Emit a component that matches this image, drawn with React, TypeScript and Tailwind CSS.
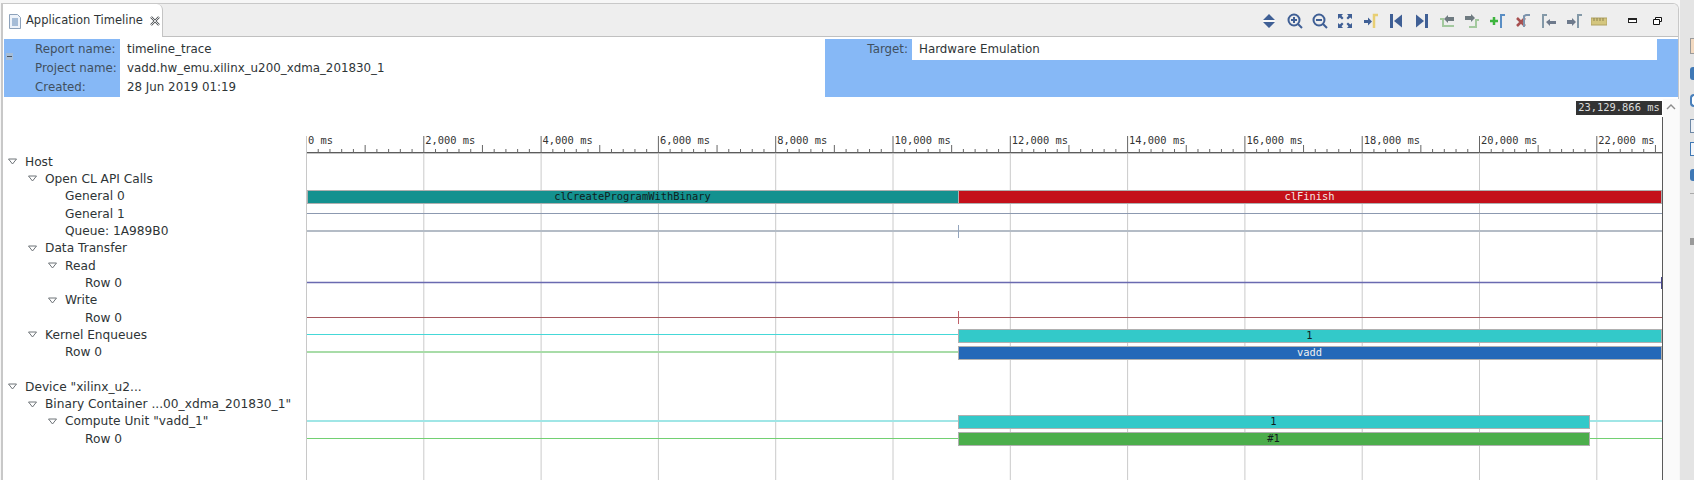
const BLUE = "#3f5f95";

const X0 = 306;
const X_END = 1662;
const PX_PER_MS = 117.3 / 2000;
const xAt = (ms: number) => X0 + ms * PX_PER_MS;

const majors = Array.from({ length: 12 }, (_, i) => i * 2000);
const treeRows: { label: string; depth: number; open?: boolean }[] = [
  { label: "Host", depth: 0, open: true },
  { label: "Open CL API Calls", depth: 1, open: true },
  { label: "General 0", depth: 2 },
  { label: "General 1", depth: 2 },
  { label: "Queue: 1A989B0", depth: 2 },
  { label: "Data Transfer", depth: 1, open: true },
  { label: "Read", depth: 2, open: true },
  { label: "Row 0", depth: 3 },
  { label: "Write", depth: 2, open: true },
  { label: "Row 0", depth: 3 },
  { label: "Kernel Enqueues", depth: 1, open: true },
  { label: "Row 0", depth: 2 },
  { label: "", depth: 0 },
  { label: 'Device "xilinx_u2...', depth: 0, open: true },
  { label: 'Binary Container ...00_xdma_201830_1"', depth: 1, open: true },
  { label: 'Compute Unit "vadd_1"', depth: 2, open: true },
  { label: "Row 0", depth: 3 },
];

const lines = [
  { y: 213.5, x1: X0, x2: X_END, color: "#8c99b0", w: 1 },
  { y: 231, x1: X0, x2: X_END, color: "#b4bcc6", w: 2 },
  { y: 282.5, x1: X0, x2: X_END, color: "#6a6ab0", w: 1.5 },
  { y: 317.5, x1: X0, x2: X_END, color: "#a5575d", w: 1 },
  { y: 334.5, x1: X0, x2: 958, color: "#45d8d8", w: 1 },
  { y: 352, x1: X0, x2: 958, color: "#a8dca8", w: 2 },
  { y: 421, x1: X0, x2: X_END, color: "#a0e6e6", w: 2 },
  { y: 438.5, x1: X0, x2: X_END, color: "#72d072", w: 1 },
];

const bars = [
  { x: 307, w: 651, y: 190, fill: "#14918f", label: "clCreateProgramWithBinary", text: "#102020" },
  { x: 958, w: 703, y: 190, fill: "#c4101a", label: "clFinish", text: "#f4e4e4" },
  { x: 958, w: 703, y: 329, fill: "#33c9c9", label: "1", text: "#102020" },
  { x: 958, w: 703, y: 346, fill: "#2468b8", label: "vadd", text: "#f0f0f0" },
  { x: 958, w: 631, y: 415, fill: "#33c9c9", label: "1", text: "#102020" },
  { x: 958, w: 631, y: 432, fill: "#4cae4c", label: "#1", text: "#102020" },
];

const TimelineChart = () => (
  <svg width={1680} height={380} viewBox="0 100 1680 380" className="absolute left-0 top-[100px]">
    {majors.map((ms) => (
      <line key={ms} x1={xAt(ms) + 0.5} x2={xAt(ms) + 0.5} y1={153} y2={480} stroke="#cacaca" />
    ))}
    <line x1={X0} x2={X_END} y1={152.5} y2={152.5} stroke="#5c5c5c" />
    <line x1={X0} x2={X_END} y1={153.5} y2={153.5} stroke="#c4c4c4" />
    {majors.map((ms) => (
      <g key={ms}>
        <line x1={xAt(ms) + 0.5} x2={xAt(ms) + 0.5} y1={136} y2={153} stroke="#666" />
        {Array.from({ length: 10 }, (_, i) => i).map(
          (i) =>
            i > 0 &&
            xAt(ms + i * 200) < X_END && (
              <line
                key={i}
                x1={xAt(ms + i * 200) + 0.5}
                x2={xAt(ms + i * 200) + 0.5}
                y1={i === 5 ? 145 : 149}
                y2={153}
                stroke="#666"
              />
            ),
        )}
        <text x={xAt(ms) + 2} y={144} className="font-['DejaVu_Sans_Mono',monospace] text-[10.4px]" fill="#333">
          {ms.toLocaleString("en-US")} ms
        </text>
      </g>
    ))}
    {lines.map((l, i) => (
      <line key={i} x1={l.x1} x2={l.x2} y1={l.y} y2={l.y} stroke={l.color} strokeWidth={l.w} />
    ))}
    <line x1={958.5} x2={958.5} y1={225} y2={238} stroke="#93a4bc" />
    <line x1={958.5} x2={958.5} y1={311} y2={324} stroke="#c06068" />
    <rect x={1661} y={277} width={2} height={12} fill="#46468a" />
    {bars.map((b) => (
      <g key={b.fill + b.y + b.x}>
        <rect x={b.x + 0.5} y={b.y + 0.5} width={b.w} height={13} fill={b.fill} stroke="#b0b0b0" />
        <text
          x={b.x + b.w / 2}
          y={b.y + 9.5}
          textAnchor="middle"
          className="font-['DejaVu_Sans_Mono',monospace] text-[10.4px]"
          fill={b.text}
        >
          {b.label}
        </text>
      </g>
    ))}
    <line x1={X0 + 0.5} x2={X0 + 0.5} y1={136} y2={480} stroke="#c8c8c8" />
    <line x1={X_END + 0.5} x2={X_END + 0.5} y1={117} y2={480} stroke="#5a5a5a" />
  </svg>
);

const Twisty = () => (
  <svg width={9} height={7} viewBox="0 0 9 7" className="-ml-[2px] shrink-0">
    <path d="M.5 1h8L4.5 6z" fill="#fff" stroke="#6e7478" strokeWidth={1} />
  </svg>
);

const TreeRow = ({ label, depth, open }: { label: string; depth: number; open?: boolean }) => (
  <div className="flex h-[17.33px] items-center whitespace-nowrap leading-none">
    <div className={depth === 0 ? "w-[10px]" : depth === 1 ? "w-[30px]" : depth === 2 ? "w-[50px]" : "w-[70px]"} />
    <div className="flex w-[15px] shrink-0 items-center">{open && <Twisty />}</div>
    <span>{label}</span>
  </div>
);

const icons = [
  <g key="updown" fill={BLUE}>
    <path d="M8 1l6 6H2zM8 15l6-6H2z" />
    <rect x={2} y={7.4} width={12} height={1.2} fill="#fff" />
  </g>,
  <g key="zoomin" fill="none" stroke={BLUE} strokeWidth={2}>
    <circle cx={7} cy={7} r={5.5} />
    <path d="M11 11l4 4M4 7h6M7 4v6" />
  </g>,
  <g key="zoomout" fill="none" stroke={BLUE} strokeWidth={2}>
    <circle cx={7} cy={7} r={5.5} />
    <path d="M11 11l4 4M4 7h6" />
  </g>,
  <g key="fit" fill={BLUE}>
    <path d="M1 1h5L4.5 2.8 6.5 5 5 6.5 2.8 4.5 1 6zM15 1h-5l1.5 1.8L9.5 5 11 6.5l2.2-2L15 6zM1 15h5l-1.5-1.8 2-2.2L5 9.5l-2.2 2L1 10zM15 15h-5l1.5-1.8-2-2.2L11 9.5l2.2 2L15 10z" />
  </g>,
  <g key="add-yellow">
    <path d="M1 7h4V4.5L9 8.5l-4 4V10H1z" fill={BLUE} />
    <path d="M11 15V2h4" fill="none" stroke="#e8cf74" strokeWidth={2.5} />
  </g>,
  <g key="first" fill={BLUE}>
    <rect x={2} y={1} width={3} height={14} />
    <path d="M14 1.5v13L6 8z" />
  </g>,
  <g key="last" fill={BLUE}>
    <rect x={11} y={1} width={3} height={14} />
    <path d="M2 1.5v13L10 8z" />
  </g>,
  <g key="green-left">
    <path d="M1 6h3v7h11" fill="none" stroke="#a3c99e" strokeWidth={2} />
    <path d="M5 6l4-4v2h6v4H9v2z" fill="#6e7a80" />
  </g>,
  <g key="green-right">
    <path d="M15 7h-3v7H5" fill="none" stroke="#a3c99e" strokeWidth={2} />
    <path d="M1 3h6V1l4 4-4 4V7H1z" fill="#6e7a80" />
  </g>,
  <g key="add-blue">
    <path d="M0 8h8M4 4v8" stroke="#3cb43c" strokeWidth={2.5} />
    <path d="M11 15V2h4" fill="none" stroke="#5a8ec4" strokeWidth={2} />
  </g>,
  <g key="remove">
    <path d="M2 5l8 8M10 5l-8 8" stroke="#a85050" strokeWidth={2.5} />
    <path d="M9 14V3l2-1h4" fill="none" stroke="#7d94ad" strokeWidth={2} />
  </g>,
  <g key="prev-marker">
    <path d="M2 15V2h4" fill="none" stroke="#8499a8" strokeWidth={2} />
    <path d="M5 9l4-3v2h6v3H9v2z" fill="#6e7a8c" />
  </g>,
  <g key="next-marker">
    <path d="M1 7h5V5l4 4-4 4v-2H1z" fill="#6e7a8c" />
    <path d="M12 15V2h4" fill="none" stroke="#8499a8" strokeWidth={2} />
  </g>,
  <g key="ruler">
    <rect x={0} y={5} width={16} height={7} fill="#d4c67e" stroke="#b0a262" />
    <path d="M3 5v3M6 5v3M9 5v3M12 5v3" stroke="#8d8250" strokeWidth={1} />
  </g>,
];

const Toolbar = () => (
  <div className="ml-auto flex items-center pt-px">
    {icons.map((icon, i) => (
      <div key={i} className="flex w-[25.4px] justify-center">
        <svg width={16} height={16} viewBox="0 0 16 16">
          {icon}
        </svg>
      </div>
    ))}
    <div className="ml-[8px] flex w-[25px] justify-center">
      <div className="h-[5px] w-[9px] border border-t-2 border-[#222] bg-white" />
    </div>
    <div className="flex w-[25px] justify-center">
      <svg width={9} height={8} viewBox="0 0 9 8">
        <path d="M2.5 2.5V.5h6v4H6.5" fill="#fff" stroke="#111" />
        <path d="M.5 2.5h6v5h-6z" fill="#fff" stroke="#111" />
      </svg>
    </div>
    <div className="w-[8px]" />
  </div>
);

const Tab = () => (
  <div className="flex h-[33px] w-[160px] shrink-0 items-center rounded-tr-[6px] border-r border-[#c4c4c4] bg-white pl-[6px] pt-px">
    <svg width={12} height={15} viewBox="0 0 12 15">
      <path d="M.5.5h8l3 3v11H.5z" fill="#eef3fa" stroke="#8da2bb" />
      <path d="M3 5h6M3 7h6M3 9h6M3 11h6" stroke="#5f86b4" />
    </svg>
    <span className="ml-[5px] whitespace-nowrap text-[11.5px] text-[#2e3436]">Application Timeline</span>
    <svg width={10} height={10} viewBox="0 0 10 10" className="ml-[7px]">
      <path d="M1 1l8 8M9 1L1 9" stroke="#55595c" strokeWidth={2.4} />
      <path d="M1 1l8 8M9 1L1 9" stroke="#fff" strokeWidth={0.8} />
    </svg>
  </div>
);

const InfoRow = ({ label, value }: { label: string; value: string }) => (
  <div className="flex h-[19px] items-center whitespace-nowrap">
    <span className="w-[123px] shrink-0 pl-[31px] text-[#41505f]">{label}</span>
    <span className="text-[#2e3436]">{value}</span>
  </div>
);

const ReportHeader = () => (
  <div className="flex h-[60px] pl-px pt-[2px] text-[11.85px]">
    <div className="relative w-[450px] shrink-0">
      <div className="absolute left-0 top-0 h-[58px] w-[116px] bg-[#86b8f6]" />
      <div className="absolute left-[2px] top-[14px] flex h-[7px] w-[7px] items-center justify-center bg-[#a5bdd8]">
        <div className="h-px w-[5px] bg-[#4a5560]" />
      </div>
      <div className="relative pt-px">
        <InfoRow label="Report name:" value="timeline_trace" />
        <InfoRow label="Project name:" value="vadd.hw_emu.xilinx_u200_xdma_201830_1" />
        <InfoRow label="Created:" value="28 Jun 2019 01:19" />
      </div>
    </div>
    <div className="ml-[371px] flex h-[58px] w-[853px] flex-col bg-[#86b8f6]">
      <div className="flex h-[21px] items-center">
        <span className="w-[87px] shrink-0 pr-[4px] text-right text-[#41505f]">Target:</span>
        <div className="flex h-[21px] w-[745px] items-center bg-white pl-[7px] text-[#2e3436]">
          Hardware Emulation
        </div>
      </div>
    </div>
  </div>
);

export default function App() {
  return (
    <div className="relative flex h-[480px] w-[1694px] overflow-hidden bg-[#e4e4e4] font-['DejaVu_Sans',sans-serif] text-[12.2px]">
      <div className="w-[1680px] shrink-0 bg-[#f6f6f6] pl-px pt-[3px]">
        <div className="flex h-[477px] w-[1678px] flex-col overflow-hidden rounded-tr-[6px] border-t border-r border-l-2 border-[#c8c8c8] bg-white">
          <div className="flex h-[33px] shrink-0 border-b border-[#c0c0c0] bg-[#eeeeee]">
            <Tab />
            <Toolbar />
          </div>
          <ReportHeader />
          <div className="mt-[4px] flex justify-end pr-[16px]">
            <div className="flex h-[14px] w-[86px] items-center justify-center bg-[#333] font-['DejaVu_Sans_Mono',monospace] text-[10.4px] text-[#dddddd]">
              23,129.866 ms
            </div>
          </div>
        </div>
      </div>
      <div className="absolute left-0 top-[153px] text-[#2e3436]">
        {treeRows.map((row, i) => (
          <TreeRow key={i} {...row} />
        ))}
      </div>
      <TimelineChart />
      <div className="absolute left-[1663px] top-[99px] flex h-[381px] w-[16px] justify-center bg-[#fafafa] pt-[4px]">
        <svg width={10} height={7} viewBox="0 0 10 7">
          <path d="M1 6l4-4 4 4" fill="none" stroke="#8c8c8c" strokeWidth={1.4} />
        </svg>
      </div>
      <div className="ml-[10px] flex flex-col items-start pt-[38px]">
        <div className="h-[16px] w-[4px] border border-r-0 border-[#9a9a9a] bg-[#f2d9c0]" />
        <div className="mt-[13px] h-[13px] w-[4px] rounded-l-[3px] bg-[#3f78b5]" />
        <div className="mt-[14px] h-[13px] w-[4px] rounded-l-full border-2 border-r-0 border-[#4a80bb] bg-white" />
        <div className="mt-[12px] h-[14px] w-[4px] border border-r-0 border-[#6d87a5] bg-[#eef1f5]" />
        <div className="mt-[9px] h-[14px] w-[4px] border border-r-0 border-[#3f78b5] bg-[#f3f5f8]" />
        <div className="mt-[13px] h-[12px] w-[4px] rounded-l-[3px] bg-[#3f78b5]" />
        <div className="mt-[12px] h-px w-[4px] bg-[#aaaaaa]" />
        <div className="mt-[44px] h-[7px] w-[4px] bg-[#9a9a9a]" />
      </div>
    </div>
  );
}
